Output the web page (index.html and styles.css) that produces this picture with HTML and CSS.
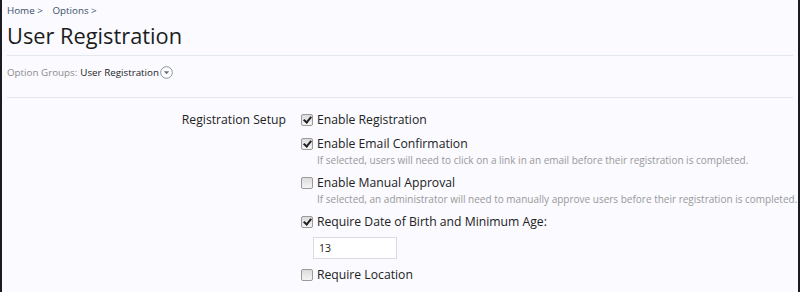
FILE: index.html
```html
<!DOCTYPE html>
<html lang="en">
<head>
    <meta charset="UTF-8">
    <title>User Registration</title>
    <link rel="stylesheet" href="styles.css">
</head>
<body>
    <div class="page">
        <div class="breadcrumb">
            <a href="#">Home</a> <span class="sep">&gt;</span>
            <a href="#">Options</a> <span class="sep">&gt;</span>
        </div>
        <h1 class="title">User Registration</h1>

        <div class="group-bar">
            <span class="group-label">Option Groups:</span>
            <span class="group-name">User Registration</span>
            <span class="group-toggle">
                <svg width="13" height="13" viewBox="0 0 13 13">
                    <circle cx="6.5" cy="6.5" r="5.8" fill="#fff" stroke="#8a8f99" stroke-width="1"/>
                    <path d="M3.8 5.2 L6.5 8.2 L9.2 5.2 Z" fill="#6a707a"/>
                </svg>
            </span>
        </div>

        <form class="options">
            <div class="option-row">
                <div class="option-label">Registration Setup</div>
                <ul class="option-list">
                    <li>
                        <label><input type="checkbox" checked><span class="box"></span>Enable Registration</label>
                    </li>
                    <li>
                        <label><input type="checkbox" checked><span class="box"></span>Enable Email Confirmation</label>
                        <p class="hint">If selected, users will need to click on a link in an email before their registration is completed.</p>
                    </li>
                    <li>
                        <label><input type="checkbox"><span class="box"></span>Enable Manual Approval</label>
                        <p class="hint">If selected, an administrator will need to manually approve users before their registration is completed.</p>
                    </li>
                    <li>
                        <label><input type="checkbox" checked><span class="box"></span>Require Date of Birth and Minimum Age:</label>
                        <div class="sub"><input type="text" class="text-box" value="13"></div>
                    </li>
                    <li>
                        <label><input type="checkbox"><span class="box"></span>Require Location</label>
                    </li>
                </ul>
            </div>
        </form>
    </div>
</body>
</html>
```

FILE: styles.css
```css
html, body {
    margin: 0;
    padding: 0;
    height: 100%;
}
body {
    font-family: "Open Sans", "Noto Sans", sans-serif;
    font-size: 12.2px;
    color: #222;
    background-color: #1b1b22;
    overflow: hidden;
}
.page {
    margin: 0 2px;
    height: 100%;
    background-color: #fafaff;
    padding: 0 5px;
}
.breadcrumb {
    padding-top: 3px;
    font-size: 9.8px;
    line-height: 16px;
    color: #3a4f6a;
    height: 16px;
}
.breadcrumb a {
    color: #3a4f6a;
    text-decoration: none;
}
.breadcrumb .sep {
    margin-right: 7px;
}
.title {
    margin: 0;
    font-weight: normal;
    font-size: 21.8px;
    line-height: 34px;
    color: #1c1c1c;
    padding-bottom: 2px;
    border-bottom: 1px solid #e3e7ee;
}
.group-bar {
    display: flex;
    align-items: center;
    height: 42px;
    box-sizing: border-box;
    padding-bottom: 8px;
    font-size: 9.8px;
    border-bottom: 1px solid #e3e7ee;
}
.group-label {
    color: #8a8a8a;
    margin-right: 3px;
}
.group-name {
    color: #222;
}
.group-toggle {
    display: flex;
    margin-left: 1px;
}
.options {
    padding-top: 12px;
}
.option-row {
    display: flex;
}
.option-label {
    flex-shrink: 0;
    width: 294px;
    text-align: right;
    padding-right: 15px;
    box-sizing: border-box;
    line-height: 20px;
}
.option-list {
    list-style: none;
    margin: 0;
    padding: 0;
}
.option-list li {
    margin-bottom: 4px;
}
.option-list label {
    display: flex;
    align-items: center;
    line-height: 20px;
}
.option-list input[type="checkbox"] {
    display: none;
}
.box {
    width: 12px;
    height: 12px;
    box-sizing: border-box;
    margin-right: 4px;
    border: 1px solid #9a9a9a;
    border-radius: 2px;
    background: linear-gradient(#dcdcdc, #f4f4f4);
    position: relative;
}
input:checked + .box::after {
    content: "";
    position: absolute;
    left: 3px;
    top: 0px;
    width: 3px;
    height: 6px;
    border: solid #222;
    border-width: 0 2px 2px 0;
    transform: rotate(40deg);
}
.hint {
    margin: -1px 0 6px 16px;
    font-size: 10px;
    color: #999;
    line-height: 14px;
    white-space: nowrap;
}
.sub {
    padding: 5px 0 2px 12px;
}
.text-box {
    display: block;
    width: 84px;
    height: 22px;
    box-sizing: border-box;
    border: 1px solid #d8dce3;
    font-family: inherit;
    font-size: 10.5px;
    padding: 2px 5px;
    color: #222;
}
```
